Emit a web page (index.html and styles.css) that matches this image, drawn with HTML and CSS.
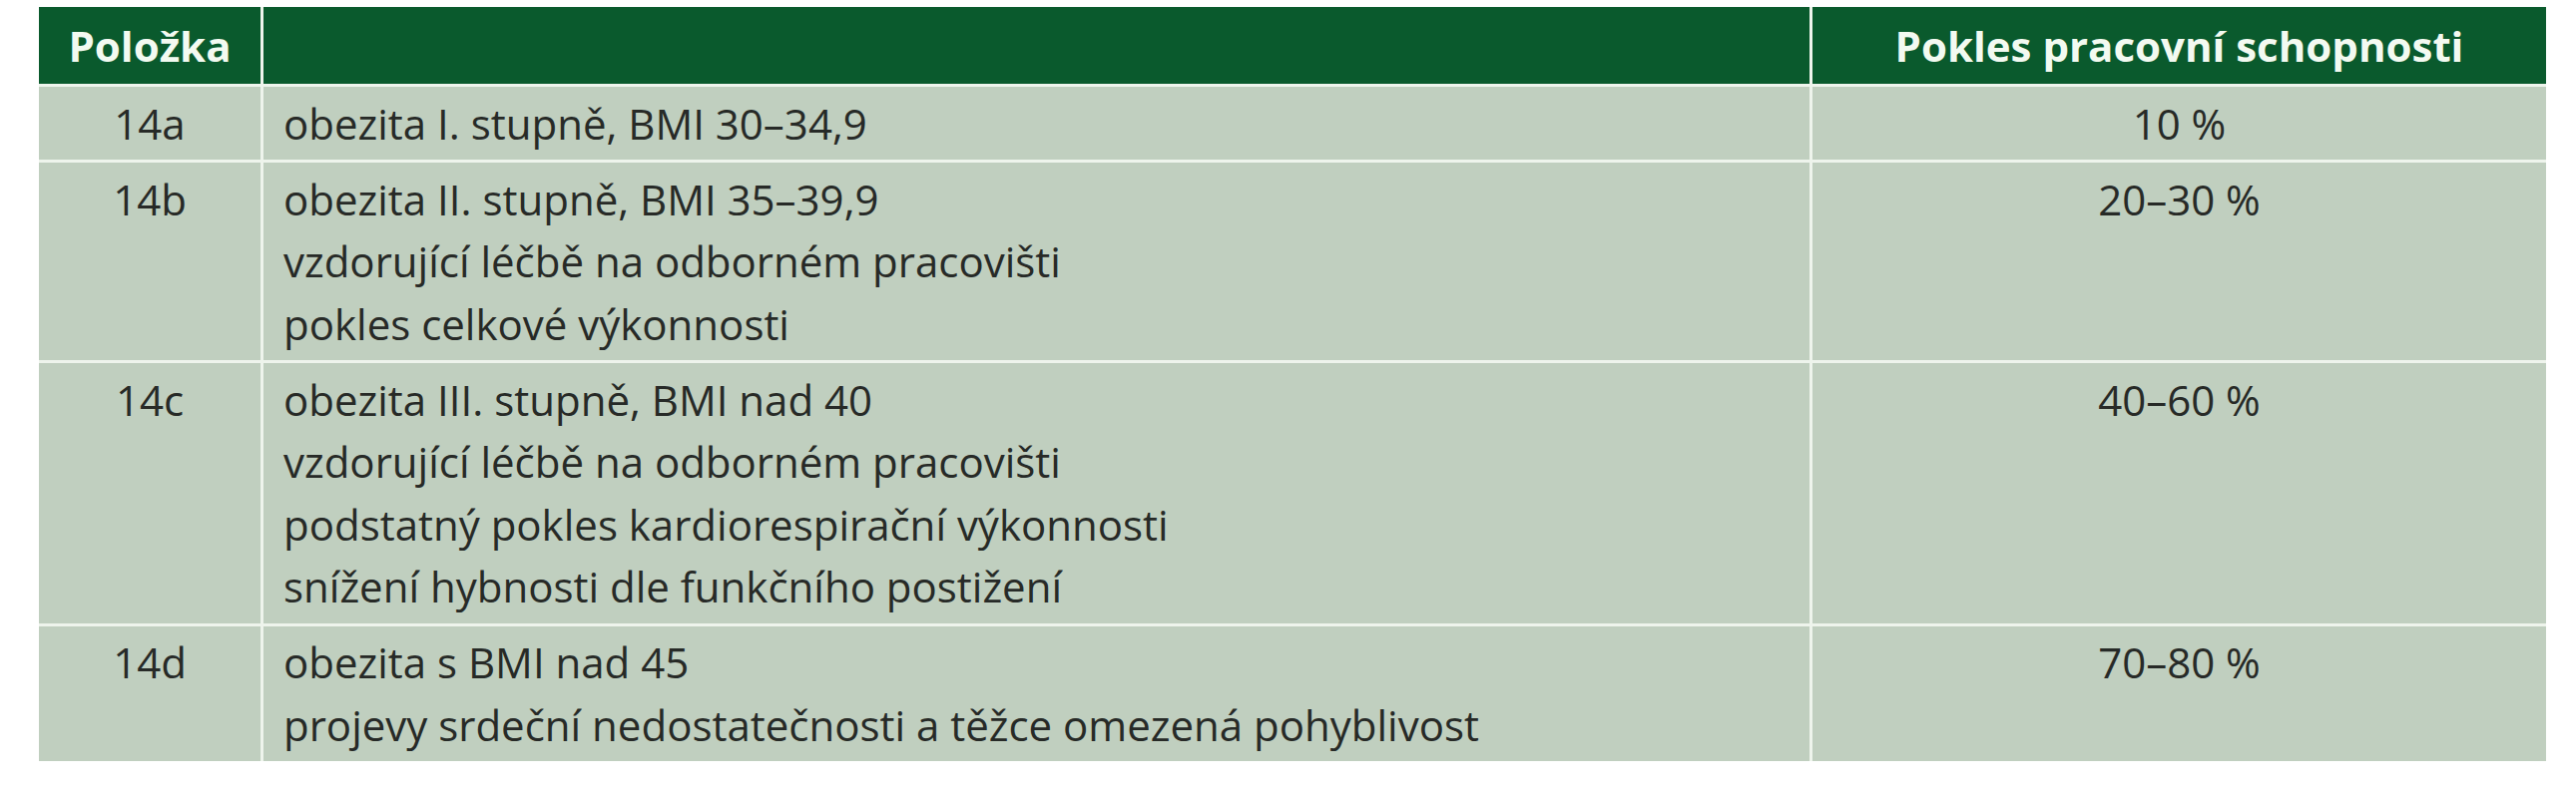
FILE: index.html
```html
<!DOCTYPE html>
<html lang="cs">
<head>
<meta charset="utf-8">
<title>Obezita – pokles pracovní schopnosti</title>
<link rel="stylesheet" href="styles.css">
</head>
<body>
<table class="grid">
  <colgroup>
    <col class="c-item">
    <col class="c-desc">
    <col class="c-val">
  </colgroup>
  <thead>
    <tr>
      <th class="center">Položka</th>
      <th></th>
      <th class="center">Pokles pracovní schopnosti</th>
    </tr>
  </thead>
  <tbody>
    <tr>
      <td class="center">14a</td>
      <td>obezita I. stupně, BMI 30–34,9</td>
      <td class="center">10 %</td>
    </tr>
    <tr>
      <td class="center">14b</td>
      <td>obezita II. stupně, BMI 35–39,9<br>vzdorující léčbě na odborném pracovišti<br>pokles celkové výkonnosti</td>
      <td class="center">20–30 %</td>
    </tr>
    <tr>
      <td class="center">14c</td>
      <td>obezita III. stupně, BMI nad 40<br>vzdorující léčbě na odborném pracovišti<br>podstatný pokles kardiorespirační výkonnosti<br>snížení hybnosti dle funkčního postižení</td>
      <td class="center">40–60 %</td>
    </tr>
    <tr>
      <td class="center">14d</td>
      <td>obezita s BMI nad 45<br>projevy srdeční nedostatečnosti a těžce omezená pohyblivost</td>
      <td class="center">70–80 %</td>
    </tr>
  </tbody>
</table>
</body>
</html>
```

FILE: styles.css
```css
html, body {
  margin: 0;
  padding: 0;
  background: #ffffff;
}

body {
  padding: 7px 0 0 39px;
  font-family: "Open Sans", "Noto Sans", "Liberation Sans", sans-serif;
}

.grid {
  width: 2512px;
  table-layout: fixed;
  border-collapse: separate;
  border-spacing: 0;
}

.c-item { width: 222px; }
.c-desc { width: 1552px; }
.c-val { width: 738px; }

.grid th,
.grid td {
  box-sizing: border-box;
  vertical-align: top;
  text-align: left;
}

.grid th {
  height: 77px;
  background: #0a5a2d;
  color: #f3faf1;
  font-weight: 700;
  font-size: 42px;
  line-height: 77px;
  padding: 0 20px;
  vertical-align: middle;
  white-space: nowrap;
}

.grid td {
  background: #c0cfbf;
  color: #272a27;
  font-size: 42px;
  line-height: 62.5px;
  padding: 5.5px 20px 5px 20px;
  border-top: 3px solid #eef4ec;
  white-space: nowrap;
}

.grid th + th,
.grid td + td {
  border-left: 3px solid #eef4ec;
}

.grid .center {
  text-align: center;
}
```
